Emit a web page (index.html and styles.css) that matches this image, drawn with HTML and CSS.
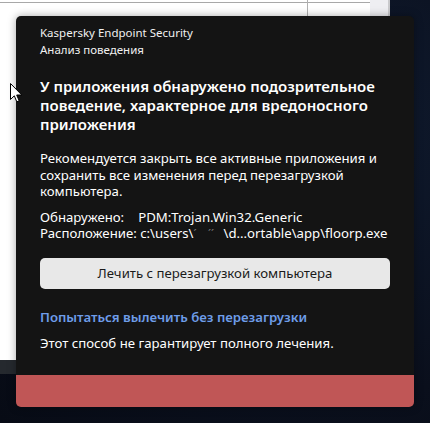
FILE: index.html
```html
<!DOCTYPE html>
<html lang="ru">
<head>
<meta charset="utf-8">
<link rel="stylesheet" href="styles.css">
</head>
<body>
<div class="desktop">
  <div class="bg-window">
    <div class="bg-topline"></div>
    <div class="bg-divider"></div>
    <div class="bg-scroll"></div>
  </div>
  <div class="bg-taskbar"></div>
  <div class="toast">
    <div class="toast-body">
      <div class="app">
        <div>Kaspersky Endpoint Security</div>
        <div>Анализ поведения</div>
      </div>
      <h1 class="title">У приложения обнаружено подозрительное поведение, характерное для вредоносного приложения</h1>
      <p class="text">Рекомендуется закрыть все активные приложения и сохранить все изменения перед перезагрузкой компьютера.</p>
      <div class="details">
        <div>Обнаружено:<span class="gap"></span>PDM:Trojan.Win32.Generic</div>
        <div>Расположение: c:\users\<span class="redact">ˊ&nbsp;&nbsp;&nbsp;&nbsp;ˊˊ</span>\d...ortable\app\floorp.exe</div>
      </div>
      <button class="btn">Лечить с перезагрузкой компьютера</button>
      <a class="link">Попытаться вылечить без перезагрузки</a>
      <p class="note">Этот способ не гарантирует полного лечения.</p>
    </div>
    <div class="bar"></div>
  </div>
  <svg class="cursor" width="13" height="20" viewBox="0 0 13 20">
    <path d="M0.5 0.5 L0.5 16.5 L4.3 12.8 L6.8 18.8 L9.2 17.8 L6.7 12 L11.8 12 Z" fill="#fff" stroke="#000" stroke-width="1" stroke-linejoin="miter"/>
  </svg>
</div>
</body>
</html>
```
FILE: styles.css
```css
* { box-sizing: border-box; }
html, body { margin: 0; padding: 0; }
body {
  width: 430px;
  height: 423px;
  overflow: hidden;
  font-family: "Noto Sans", "Open Sans", sans-serif;
}
.desktop {
  position: relative;
  width: 430px;
  height: 423px;
  background: radial-gradient(circle at 80% 30%, #0f1a2e 0%, #0a0f1c 60%, #070b15 100%);
  overflow: hidden;
}
.bg-window {
  position: absolute;
  left: 0;
  top: 0;
  width: 390px;
  height: 360px;
  background: #fff;
  border-right: 2px solid #c9c9cc;
}
.bg-topline {
  position: absolute;
  left: 0;
  top: 2px;
  width: 370px;
  height: 1px;
  background: #a8a8a8;
}
.bg-divider {
  position: absolute;
  left: 307px;
  top: 0;
  width: 1px;
  height: 16px;
  background: #b0b0b0;
}
.bg-scroll {
  position: absolute;
  left: 370px;
  top: 0;
  width: 18px;
  height: 360px;
  background: #eeeef2;
}
.bg-taskbar {
  position: absolute;
  left: 0;
  top: 360px;
  width: 390px;
  height: 14px;
  background: #25292e;
}
.toast {
  position: absolute;
  left: 16px;
  top: 16px;
  width: 398px;
  height: 391px;
  background: #141414;
  border-radius: 5px;
  overflow: hidden;
  display: flex;
  flex-direction: column;
  box-shadow: 0 0 8px rgba(0,0,0,0.35);
}
.toast-body {
  flex: 1;
  padding: 8px 24px 0 24px;
  color: #fff;
}
.app {
  font-size: 11.5px;
  line-height: 17px;
  color: #f0f0f0;
}
.title {
  margin: 19px 0 0 0;
  font-size: 15px;
  font-weight: 600;
  line-height: 19px;
  color: #fff;
}
.text {
  margin: 16px 0 0 0;
  font-size: 13.2px;
  line-height: 16.5px;
}
.details {
  margin-top: 9px;
  font-size: 13.2px;
  line-height: 16.5px;
  white-space: nowrap;
}
.gap { display: inline-block; width: 14px; }
.redact {
  display: inline-block;
  width: 30px;
  color: #777;
  font-size: 11px;
}
.btn {
  display: block;
  margin-top: 15px;
  width: 350px;
  height: 31px;
  border: none;
  border-radius: 5px;
  background: #e8e8e8;
  color: #1a1a1a;
  font-family: inherit;
  font-size: 13.2px;
  padding: 0;
}
.link {
  display: block;
  margin-top: 20px;
  font-size: 13.2px;
  font-weight: 600;
  line-height: 17px;
  color: #6e9de9;
}
.note {
  margin: 9px 0 0 0;
  font-size: 13.2px;
  line-height: 17px;
}
.bar {
  height: 32px;
  background: #c05656;
}
.cursor {
  position: absolute;
  left: 10px;
  top: 83px;
}
```
